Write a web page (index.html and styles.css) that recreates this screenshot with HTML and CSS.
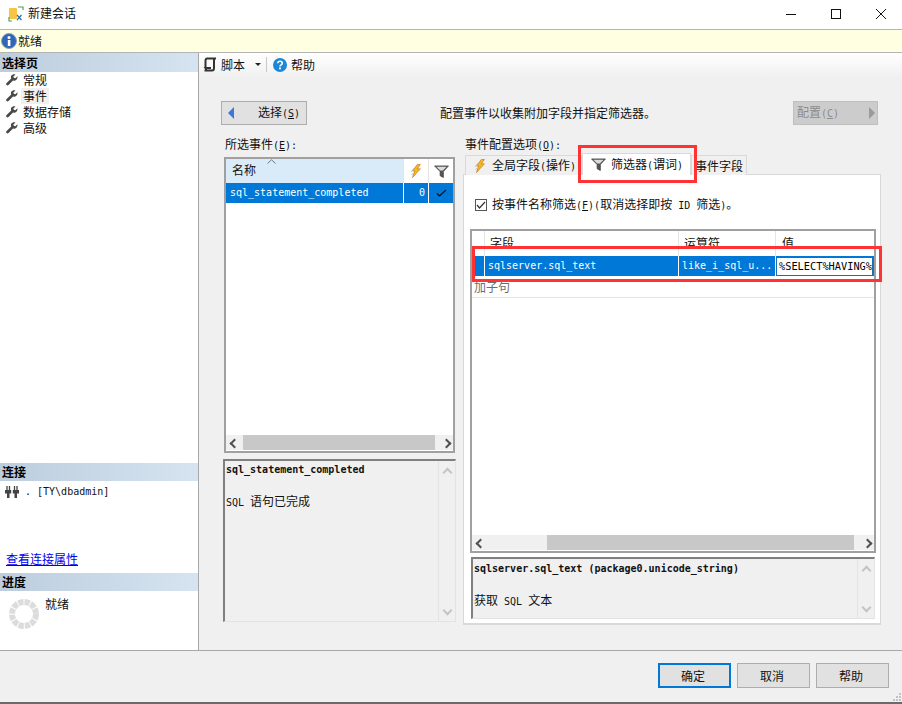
FILE: index.html
```html
<!DOCTYPE html>
<html lang="zh">
<head>
<meta charset="utf-8">
<title>新建会话</title>
<link rel="stylesheet" href="styles.css">
</head>
<body>
<svg class="defs" width="0" height="0" aria-hidden="true">
  <symbol id="wrench" viewBox="0 0 12 12"><path d="M11.5 2.2 9.3 4.2 7.8 3.8 7.4 2.4 9.500.4C8-.2 6.200.3 5.400 1.600 4.800 2.600 4.800 3.600 5.200 4.600L.6 8.900C0 9.600 0 10.400.5 11s1.400.6 2 0L7 6.600c1.100.4 2.300.3 3.200-.5 1-.9 1.500-2.500 1.300-3.900Z" fill="#4a4a4a"/></symbol>
  <symbol id="bolt" viewBox="0 0 16 16"><path d="M9.500.5H13L9.500 5.500h3.500L4 15.500l2.500-7.500H4Z" fill="#f5b81e" stroke="#c9791a" stroke-width=".8"/><path d="M2.500 9 6 4.500M3 12.500 4.500 10.500" stroke="#b9b9b9" stroke-width="1"/></symbol>
  <symbol id="funnel" viewBox="0 0 16 14"><path d="M.5 1h15L10 7v6.500L6.500 11.500V7Z" fill="#555" stroke="#444" stroke-width=".8"/><path d="M2.500 2h11L9.500 6H6.500Z" fill="#dcdcdc"/></symbol>
</svg>

<div class="window">
  <header class="titlebar">
    <svg class="app-icon" width="16" height="16" viewBox="0 0 16 16"><rect x="1" y="2" width="8" height="11" rx="1" fill="#f6c544"/><path d="M10 1h5v3M1 11v4h3" fill="none" stroke="#4aa564" stroke-width="1.200"/><path d="M9 9l4.500 5M13.500 9 9 14" stroke="#2b6fb3" stroke-width="1.200"/></svg>
    <span class="title-text">新建会话</span>
    <div class="win-controls">
      <svg width="12" height="12" viewBox="0 0 12 12"><path d="M1 6.500h10" stroke="#111" stroke-width="1"/></svg>
      <svg width="12" height="12" viewBox="0 0 12 12"><rect x="1.500" y="1.500" width="9" height="9" fill="none" stroke="#111" stroke-width="1"/></svg>
      <svg width="12" height="12" viewBox="0 0 12 12"><path d="M1 1l10 10M11 1 1 11" stroke="#111" stroke-width="1"/></svg>
    </div>
  </header>

  <div class="infobar">
    <svg width="16" height="16" viewBox="0 0 16 16"><circle cx="8" cy="8" r="7.500" fill="#2f66b8" stroke="#8aa0bd"/><circle cx="8" cy="4.500" r="1.500" fill="#fff"/><rect x="6.800" y="7" width="2.600" height="6" fill="#fff"/></svg>
    <span>就绪</span>
  </div>

  <div class="body">
    <aside class="sidebar">
      <h2 class="side-head">选择页</h2>
      <ul class="nav">
        <li><svg class="wr"><use href="#wrench"/></svg><span>常规</span></li>
        <li><svg class="wr"><use href="#wrench"/></svg><span class="hover">事件</span></li>
        <li><svg class="wr"><use href="#wrench"/></svg><span>数据存储</span></li>
        <li><svg class="wr"><use href="#wrench"/></svg><span>高级</span></li>
      </ul>
      <div class="side-spacer"></div>
      <h2 class="side-head">连接</h2>
      <div class="conn">
        <svg width="14" height="14" viewBox="0 0 14 14"><path d="M0 5h6.200v3.500H4.500V13H2V8.500H0ZM7.800 5H14v3.500h-2V13H9.500V8.500H7.800Z" fill="#444"/><path d="M2 1v4M4.500 1v4M9.500 1v4M12 1v4" stroke="#444" stroke-width="1.300"/></svg>
        <span class="m conn-text">. [TY\dbadmin]</span>
      </div>
      <a class="conn-link" href="#">查看连接属性</a>
      <h2 class="side-head">进度</h2>
      <div class="progress">
        <svg width="32" height="32" viewBox="0 0 32 32"><circle cx="16" cy="16" r="12" fill="none" stroke="#dcdcdc" stroke-width="6" stroke-dasharray="5.300 1"/></svg>
        <span>就绪</span>
      </div>
    </aside>

    <main class="main">
      <div class="toolbar">
        <svg width="14" height="15" viewBox="0 0 14 15"><path d="M4 1.500h9M4 1.500C2.500 1.500 2.500 3 2.500 4v7M11 2v9c0 2-1 2.500-2 2.500H1.500c1.500 0 2-1 1-2.500H8" fill="none" stroke="#333" stroke-width="2"/></svg>
        <span class="tb-label">脚本</span>
        <i class="caret"></i>
        <i class="tb-sep"></i>
        <svg width="14" height="14" viewBox="0 0 14 14"><circle cx="7" cy="7" r="7" fill="#1b87d6"/><path d="M4.800 5.300C4.800 3.900 5.900 3.200 7 3.200s2.300.7 2.300 2c0 1.700-2.300 1.700-2.300 3.300" fill="none" stroke="#fff" stroke-width="1.600"/><rect x="6.100" y="9.500" width="1.800" height="1.800" fill="#fff"/></svg>
        <span>帮助</span>
      </div>

      <div class="content">
        <div class="actions">
          <button class="nav-btn" type="button"><i class="tri-left"></i><span>选择<span class="m">(<u>S</u>)</span></span></button>
          <span class="action-text">配置事件以收集附加字段并指定筛选器。</span>
          <button class="nav-btn disabled" type="button"><span>配置<span class="m">(<u>C</u>)</span></span><i class="tri-right"></i></button>
        </div>

        <div class="columns">
          <section class="left-col">
            <div class="col-label">所选事件<span class="m">(<u>E</u>):</span></div>
            <div class="list-box">
              <div class="list-head">
                <div class="lh-name">名称<svg class="sort" width="9" height="5" viewBox="0 0 9 5"><path d="M.5 4.500 4.500.8l4 3.700" fill="none" stroke="#777"/></svg></div>
                <div class="lh-icon"><svg width="14" height="14"><use href="#bolt"/></svg></div>
                <div class="lh-icon"><svg width="15" height="13"><use href="#funnel"/></svg></div>
              </div>
              <div class="list-row">
                <div class="lr-name m">sql_statement_completed</div>
                <div class="lr-num m">0</div>
                <div class="lr-check"><svg width="11" height="8" viewBox="0 0 11 8"><path d="M1 4.500 3.500 7 10 1" fill="none" stroke="#111" stroke-width="1.200"/></svg></div>
              </div>
              <div class="list-fill"></div>
              <div class="hscroll">
                <i class="sb-l"></i><div class="thumb thumb-a"></div><i class="sb-r"></i>
              </div>
            </div>
            <div class="desc desc-left">
              <div class="desc-text">
                <div class="m bold">sql_statement_completed</div>
                <div class="desc-line"><span class="m">SQL </span>语句已完成</div>
              </div>
              <div class="vscroll"><i class="sb-u"></i><i class="sb-d"></i></div>
            </div>
          </section>

          <section class="right-col">
            <div class="col-label right-label">事件配置选项<span class="m">(<u>O</u>):</span></div>
            <div class="tabs">
              <div class="tab tab-1"><svg width="14" height="14"><use href="#bolt"/></svg><span>全局字段<span class="m">(</span>操作<span class="m">)</span></span></div>
              <div class="tab active"><svg width="15" height="13"><use href="#funnel"/></svg><span>筛选器<span class="m">(</span>谓词<span class="m">)</span></span></div>
              <div class="tab tab-3"><span>事件字段</span></div>
            </div>
            <div class="panel">
              <label class="check-row"><i class="checkbox"><svg width="10" height="8" viewBox="0 0 10 8"><path d="M1 4l2.500 3L9 1" fill="none" stroke="#333" stroke-width="1.200"/></svg></i><span>按事件名称筛选<span class="m">(<u>F</u>)(</span>取消选择即按<span class="m"> ID </span>筛选<span class="m">)</span>。</span></label>

              <div class="grid-box">
                <div class="g-row g-head">
                  <div class="g-c0"></div><div class="g-c1">字段</div><div class="g-c2">运算符</div><div class="g-c3">值</div>
                </div>
                <div class="g-row g-sel m">
                  <div class="g-c0"></div><div class="g-c1">sqlserver.sql_text</div><div class="g-c2">like_i_sql_u...</div><div class="g-c3 editor">%SELECT%HAVING%</div>
                </div>
                <div class="g-add">加子句</div>
                <div class="list-fill"></div>
                <div class="hscroll">
                  <i class="sb-l"></i><div class="thumb thumb-b"></div><i class="sb-r"></i>
                </div>
              </div>

              <div class="desc desc-right">
                <div class="desc-text">
                  <div class="m bold">sqlserver.sql_text (package0.unicode_string)</div>
                  <div class="desc-line">获取<span class="m"> SQL </span>文本</div>
                </div>
                <div class="vscroll"><i class="sb-u"></i><i class="sb-d"></i></div>
              </div>
            </div>
          </section>
        </div>
      </div>
      <i class="mark mark-tab"></i>
      <i class="mark mark-row"></i>
    </main>
  </div>

  <footer class="footer">
    <button class="btn primary" type="button">确定</button>
    <button class="btn" type="button">取消</button>
    <button class="btn" type="button">帮助</button>
    <svg class="grip" width="10" height="10" viewBox="0 0 10 10"><path d="M7 1h2v2H7ZM4 4h2v2H4ZM7 4h2v2H7ZM1 7h2v2H1ZM4 7h2v2H4ZM7 7h2v2H7Z" fill="#c4c4c4"/></svg>
  </footer>
</div>
</body>
</html>
```
FILE: styles.css
```css
* { box-sizing: border-box; }
html, body { margin: 0; padding: 0; }
body {
  width: 902px;
  height: 704px;
  overflow: hidden;
  background: #f0f0f0;
  font: 12px/16px "Noto Sans CJK SC", "Liberation Sans", sans-serif;
  color: #111;
}
.defs { position: absolute; }
i { display: block; font-style: normal; }
svg { display: block; flex: none; }
h2 { margin: 0; font-size: 12px; }
ul { list-style: none; margin: 0; padding: 0; }
button { font: inherit; color: inherit; padding: 0; }

.m {
  font-family: "DejaVu Sans Mono", "Liberation Mono", monospace;
  font-size: 10px;
  white-space: pre;
}
.bold { font-weight: 700; }

.window {
  width: 902px;
  height: 704px;
  display: flex;
  flex-direction: column;
  border-bottom: 2px solid #6a6a6a;
}

.titlebar {
  height: 30px;
  flex: none;
  display: flex;
  align-items: center;
  background: #fff;
  border-bottom: 1px solid #b4b4b4;
  padding: 0 0 2px 8px;
  gap: 4px;
}
.title-text { padding-bottom: 1px; }
.win-controls {
  margin-left: auto;
  display: flex;
  gap: 33px;
  padding-right: 15px;
}

.infobar {
  height: 23px;
  flex: none;
  display: flex;
  align-items: center;
  padding-left: 1px;
  gap: 1px;
  background: #ffffe1;
  border-bottom: 1px solid #b4b4b4;
}

.body { flex: 1; min-height: 0; display: flex; }

.sidebar {
  width: 199px;
  flex: none;
  display: flex;
  flex-direction: column;
  background: #fff;
  border-right: 1px solid #a8a8a8;
}
.side-head {
  height: 18px;
  line-height: 18px;
  padding-left: 2px;
  background: linear-gradient(90deg, #bccddd, #d6e4f1);
  color: #000;
}
.sidebar > .side-head:first-child { height: 19px; line-height: 19px; }
.nav li { height: 16px; display: flex; align-items: center; padding-left: 6px; gap: 5px; }
.nav .hover { background: #f0f0f0; padding: 0 2px; margin-left: -2px; }
.wr { width: 12px; height: 12px; }
.side-spacer { height: 327px; }
.conn { height: 22px; display: flex; align-items: center; padding-left: 5px; gap: 6px; }
.conn-link {
  display: block;
  margin-top: 48px;
  height: 16px;
  padding-left: 6px;
  color: #0000ee;
  text-decoration: underline;
}
.sidebar .conn-link + .side-head { margin-top: 6px; }
.progress { display: flex; padding: 7px 0 0 8px; gap: 5px; align-items: flex-start; }
.progress span { margin-top: -2px; }

.main {
  flex: 1;
  min-width: 0;
  position: relative;
  display: flex;
  flex-direction: column;
}
.toolbar {
  height: 25px;
  flex: none;
  display: flex;
  align-items: center;
  padding: 0 0 2px 4px;
  background: linear-gradient(#fff, #f0f0f0);
}
.tb-label { margin-left: 3px; }
.caret {
  width: 0; height: 0;
  margin-left: 10px;
  border: 3px solid transparent;
  border-top: 3px solid #222;
  border-bottom: 0;
}
.tb-sep { width: 1px; height: 15px; background: #c8c8c8; margin: 0 6px 0 5px; }
.toolbar svg + span { margin-left: 4px; }

.content { padding: 23px 21px 0 22px; }
.actions { display: flex; align-items: center; height: 24px; margin-right: 3px; }
.nav-btn {
  width: 86px;
  height: 24px;
  display: flex;
  align-items: center;
  justify-content: space-between;
  padding: 0 6px 0 6px;
  background: #e1e1e1;
  border: 1px solid #adadad;
}
.nav-btn.disabled { width: 85px; background: #cccccc; border-color: #bfbfbf; color: #8c8c8c; padding: 0 2px 0 3px; }
.tri-left { width: 0; height: 0; border: 6px solid transparent; border-left: 0; border-right: 6px solid #3c78d8; }
.tri-right { width: 0; height: 0; border: 6px solid transparent; border-right: 0; border-left: 6px solid #9a9a9a; }
.action-text { margin-left: 133px; flex: 1; }

.columns { display: flex; gap: 8px; margin-top: 12px; margin-left: 3px; }
.left-col { width: 231px; flex: none; display: flex; flex-direction: column; }
.right-col { width: 418px; flex: none; display: flex; flex-direction: column; }
.col-label { height: 20px; padding-left: 1px; line-height: 14px; }
.right-label { height: 18px; padding-left: 2px; }

.list-box {
  height: 296px;
  display: flex;
  flex-direction: column;
  background: #fff;
  border: 2px solid #a0a0a0;
}
.list-head { height: 24px; flex: none; display: flex; }
.lh-name {
  width: 178px;
  background: #d9ebf9;
  padding: 3px 0 0 6px;
  position: relative;
}
.sort { position: absolute; left: 41px; top: 0; }
.lh-icon {
  width: 25px;
  display: flex;
  align-items: center;
  justify-content: center;
  border-left: 1px solid #e5e5e5;
}
.list-row { height: 20px; flex: none; display: flex; background: #0078d7; color: #fff; line-height: 19px; }
.lr-name { width: 178px; padding-left: 4px; }
.lr-num { width: 25px; border-left: 1px solid #fff; text-align: right; padding-right: 3px; }
.lr-check {
  width: 25px;
  border-left: 1px solid #fff;
  display: flex;
  align-items: center;
  justify-content: center;
}
.list-fill { flex: 1; }
.hscroll {
  height: 15px;
  flex: none;
  margin-bottom: 1px;
  display: flex;
  align-items: center;
  background: #f0f0f0;
}
.thumb { height: 15px; background: #c8c8c8; }
.thumb-a { width: 192px; margin-left: 2px; }
.thumb-b { width: 307px; margin-left: 60px; }
.sb-l, .sb-r { width: 15px; height: 15px; flex: none; position: relative; }
.sb-l::after, .sb-r::after, .sb-u::after, .sb-d::after {
  content: "";
  position: absolute;
  left: 5px;
  top: 5px;
  width: 5px;
  height: 5px;
  border-top: 2px solid #505050;
  border-left: 2px solid #505050;
}
.sb-l::after { transform: rotate(-45deg); }
.sb-r::after { transform: rotate(135deg); }
.sb-r { margin-left: auto; }

.desc {
  display: flex;
  background: #f0f0f0;
  border: 2px solid #e3e3e3;
  border-top-color: #808080;
  border-left-color: #808080;
  border-right-width: 1px;
  border-bottom-width: 1px;
}
.desc-left { height: 163px; margin: 6px -1px 0 -1px; }
.desc-text { flex: 1; min-width: 0; padding: 1px 0 0 1px; }
.desc-line { margin-top: 15px; }
.vscroll {
  width: 17px;
  flex: none;
  display: flex;
  flex-direction: column;
  justify-content: space-between;
  border-left: 1px solid #e3e3e3;
  padding: 2px 0 2px;
}
.sb-u, .sb-d { width: 15px; height: 15px; position: relative; }
.sb-u::after, .sb-d::after { border-color: #c4c4c4; }
.sb-u::after { transform: rotate(45deg); top: 6px; }
.sb-d::after { transform: rotate(225deg); top: 3px; }

.tabs { height: 20px; flex: none; display: flex; position: relative; z-index: 1; padding-left: 2px; }
.tab {
  display: flex;
  align-items: center;
  gap: 5px;
  height: 20px;
  background: #f0f0f0;
  border: 1px solid #d9d9d9;
  border-bottom: 0;
}
.tab-1 { width: 117px; padding-left: 7px; }
.tab-3 { width: 56px; padding-left: 3px; }
.tab.active {
  width: 109px;
  height: 22px;
  margin-top: -2px;
  padding-left: 8px;
  background: #fff;
}
.panel {
  height: 451px;
  margin-top: -1px;
  padding: 24px 4px 0 6px;
  background: #fff;
  border: 1px solid #d9d9d9;
  border-bottom-width: 2px;
}
.check-row { display: flex; align-items: center; gap: 5px; height: 12px; margin-left: 5px; }
.checkbox {
  width: 12px;
  height: 12px;
  display: flex;
  align-items: center;
  justify-content: center;
  border: 1px solid #555;
  background: #fff;
}
.grid-box {
  height: 324px;
  margin-top: 18px;
  display: flex;
  flex-direction: column;
  background: #fff;
  border: 2px solid #a0a0a0;
}
.g-row { display: flex; flex: none; }
.g-head { height: 25px; line-height: 24px; }
.g-sel { height: 20px; line-height: 19px; background: #0078d7; color: #fff; }
.g-c0 { width: 13px; border-right: 1px solid #e5e5e5; }
.g-c1 { width: 194px; padding-left: 3px; border-right: 1px solid #e5e5e5; }
.g-c2 { width: 97px; padding-left: 3px; border-right: 1px solid #e5e5e5; }
.g-c3 { flex: 1; padding-left: 6px; white-space: nowrap; overflow: hidden; }
.g-head .g-c1 { padding-left: 5px; }
.g-head .g-c2 { padding-left: 5px; }
.g-sel .g-c0, .g-sel .g-c1, .g-sel .g-c2 { border-right-color: #fff; }
.g-sel .editor {
  flex: none;
  width: 97px;
  margin-top: 1px;
  padding-left: 2px;
  height: 19px;
  line-height: 17px;
  background: #fff;
  color: #000;
  border: 1px solid #1a6fb5;
  font-size: 10.3px;
}
.g-add {
  height: 22px;
  flex: none;
  padding-left: 2px;
  color: #6d6d6d;
  line-height: 21px;
  border-bottom: 1px solid #e5e5e5;
}
.desc-right { height: 62px; margin: 4px 1px 0 1px; }
.desc-right .desc-text { padding-top: 2px; }

.mark { position: absolute; display: block; border: 3px solid #ff3333; pointer-events: none; z-index: 2; }
.mark-tab { left: 379px; top: 92px; width: 119px; height: 38px; }
.mark-row { left: 273px; top: 193px; width: 410px; height: 36px; }

.footer {
  height: 52px;
  flex: none;
  position: relative;
  display: flex;
  justify-content: flex-end;
  align-items: flex-start;
  gap: 6px;
  padding: 12px 13px 0 0;
  background: #f0f0f0;
  border-top: 1px solid #a8a8a8;
}
.btn {
  width: 73px;
  height: 25px;
  padding-right: 3px;
  background: #e1e1e1;
  border: 1px solid #adadad;
}
.btn.primary { border: 2px solid #0078d7; }
.grip { position: absolute; right: 0; bottom: 0; }
```
